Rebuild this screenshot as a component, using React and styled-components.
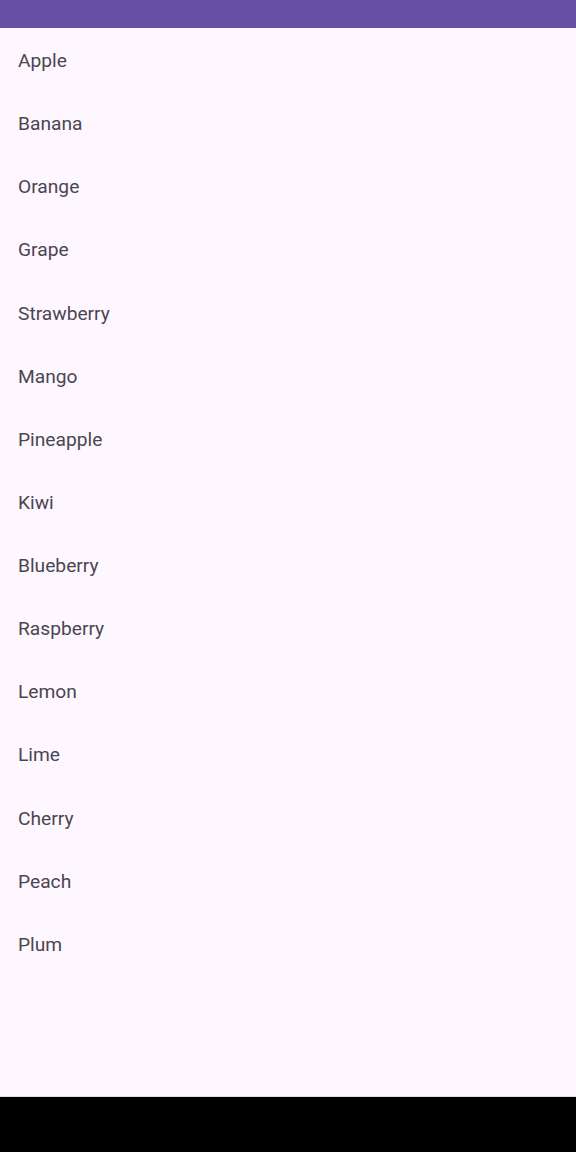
import React from 'react';
import styled, { createGlobalStyle } from 'styled-components';

const GlobalStyle = createGlobalStyle`
  html, body {
    margin: 0;
    padding: 0;
    background: #fef7ff;
  }
  * { box-sizing: border-box; }
`;

const Screen = styled.div`
  width: 576px;
  height: 1152px;
  display: flex;
  flex-direction: column;
  background-color: #fef7ff;
  font-family: Roboto, "Noto Sans", sans-serif;
`;

const StatusBar = styled.div`
  height: 28px;
  flex-shrink: 0;
  background-color: #6750a4;
`;

const List = styled.ul`
  flex: 1;
  margin: 0;
  padding: 1px 0 0;
  list-style: none;
`;

const Row = styled.li`
  height: 63.14px;
  display: flex;
  align-items: center;
  padding-left: 18px;
  font-size: 19.2px;
  color: #4a4650;
`;

const NavBar = styled.div`
  height: 56px;
  flex-shrink: 0;
  background-color: #000;
  border-top: 1px solid #e0dce2;
`;

const fruits = [
  'Apple', 'Banana', 'Orange', 'Grape', 'Strawberry', 'Mango', 'Pineapple',
  'Kiwi', 'Blueberry', 'Raspberry', 'Lemon', 'Lime', 'Cherry', 'Peach', 'Plum',
];

const App = () => (
  <>
    <GlobalStyle />
    <Screen>
      <StatusBar />
      <List>
        {fruits.map(f => <Row key={f}>{f}</Row>)}
      </List>
      <NavBar />
    </Screen>
  </>
);

export default App;
